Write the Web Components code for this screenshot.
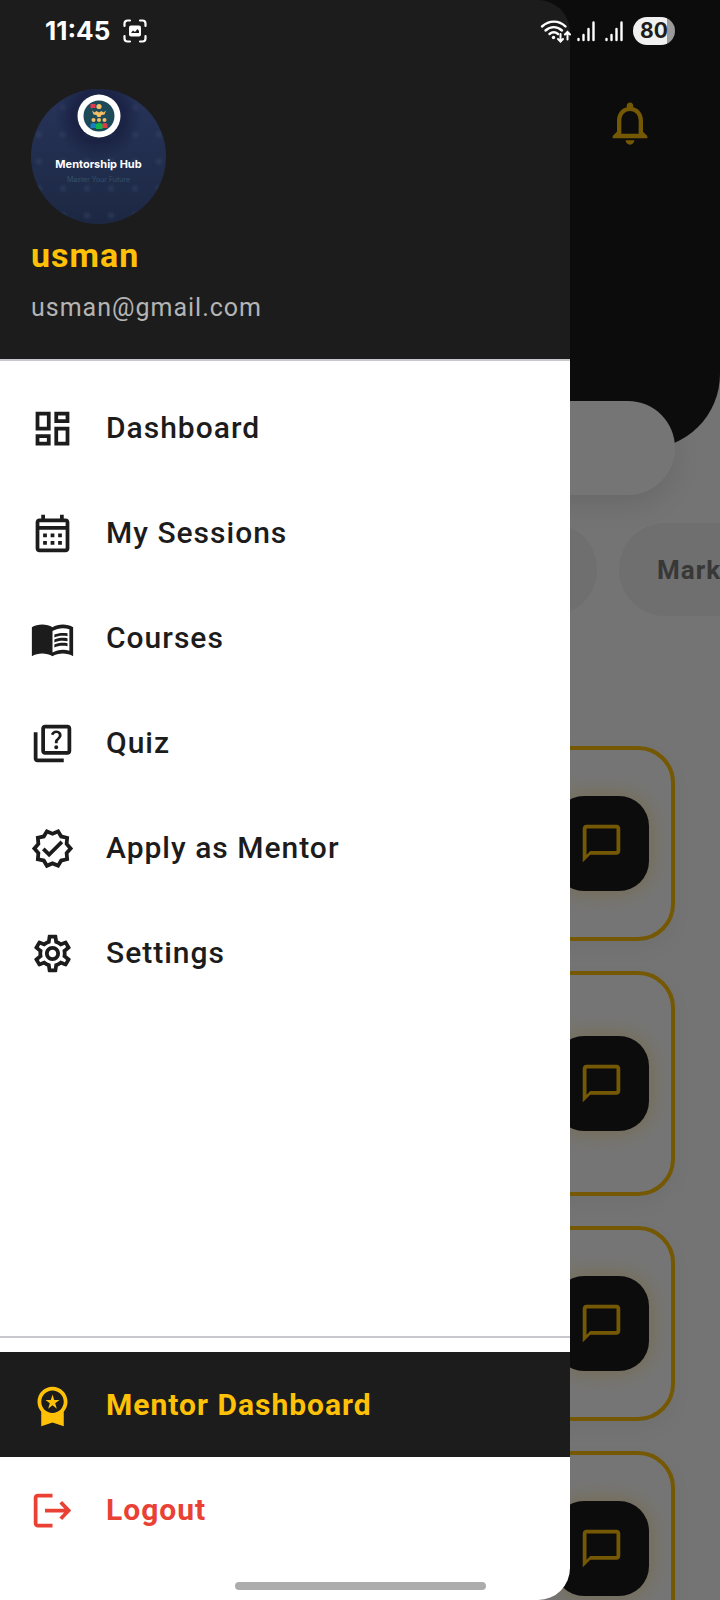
<!DOCTYPE html>
<html lang="en">
<head>
<meta charset="utf-8">
<meta name="viewport" content="width=device-width, initial-scale=1">
<title>Mentorship Hub</title>
<style>
  html, body {
    height: 100%;
    margin: 0;
  }

  body {
    --ink: #1c1c1c;
    --amber: #ffc107;
    --danger: #e94235;
    --line: #cac8ce;

    font-family: Roboto, "Noto Sans", sans-serif;
    color: var(--ink);
    overflow: hidden;
  }
</style>
</head>
<body>
<app-shell>
  <home-page slot="page">
    <filter-chip slot="chips">Design</filter-chip>
    <filter-chip slot="chips">Mark</filter-chip>
    <mentor-card></mentor-card>
    <mentor-card tall></mentor-card>
    <mentor-card></mentor-card>
    <mentor-card></mentor-card>
  </home-page>

  <nav-drawer slot="drawer">
    <user-header slot="header" email="usman@gmail.com">usman</user-header>
    <nav-item icon="dashboard">Dashboard</nav-item>
    <nav-item icon="calendar">My Sessions</nav-item>
    <nav-item icon="book">Courses</nav-item>
    <nav-item icon="quiz">Quiz</nav-item>
    <nav-item icon="verified">Apply as Mentor</nav-item>
    <nav-item icon="settings">Settings</nav-item>
    <nav-item slot="footer" icon="premium" tone="dark">Mentor Dashboard</nav-item>
    <nav-item slot="footer" icon="logout" tone="danger">Logout</nav-item>
  </nav-drawer>

  <status-bar slot="status" time="11:45" battery="80"></status-bar>
</app-shell>

<script>
const icons = {
  dashboard: '<path d="M19 5v2h-4V5h4M9 5v6H5V5h4m10 8v6h-4v-6h4M9 17v2H5v-2h4M21 3h-8v6h8V3zM11 3H3v10h8V3zm10 8h-8v10h8V11zm-10 4H3v6h8v-6z"/>',
  calendar: '<path d="M19 4h-1V2h-2v2H8V2H6v2H5c-1.11 0-1.99.9-1.99 2L3 20c0 1.1.89 2 2 2h14c1.1 0 2-.9 2-2V6c0-1.1-.9-2-2-2zm0 16H5V10h14v10zm0-12H5V6h14v2zM9 14H7v-2h2v2zm4 0h-2v-2h2v2zm4 0h-2v-2h2v2zm-8 4H7v-2h2v2zm4 0h-2v-2h2v2zm4 0h-2v-2h2v2z"/>',
  book: '<path fill-rule="evenodd" d="M17.5 4.5c-1.95 0-4.05.4-5.5 1.5-1.45-1.1-3.55-1.5-5.5-1.5S2.45 4.9 1 6v15.5C2.45 20.4 4.55 20 6.5 20s4.05.4 5.5 1.5c1.45-1.1 3.55-1.5 5.5-1.5s4.05.4 5.5 1.5V6c-1.45-1.1-3.55-1.5-5.5-1.5zM21 18.5c-1.1-.35-2.3-.5-3.5-.5-1.7 0-4.15.65-5.5 1.5V8c1.35-.85 3.8-1.5 5.5-1.5 1.2 0 2.4.15 3.5.5v11.5z"/><path d="M17.5 10.5c.88 0 1.73.09 2.5.26V9.24c-.79-.15-1.64-.24-2.5-.24-1.7 0-3.24.29-4.5.83v1.66c1.13-.64 2.7-.99 4.5-.99zM13 12.49v1.66c1.13-.64 2.7-.99 4.5-.99.88 0 1.73.09 2.5.26V11.9c-.79-.15-1.64-.24-2.5-.24-1.7 0-3.24.3-4.5.83zM17.5 14.33c-1.7 0-3.24.29-4.5.83v1.66c1.13-.64 2.7-.99 4.5-.99.88 0 1.73.09 2.5.26v-1.52c-.79-.16-1.64-.24-2.5-.24z"/>',
  quiz: '<path d="M4 6H2v14c0 1.1.9 2 2 2h14v-2H4V6zM20 2H8c-1.1 0-2 .9-2 2v12c0 1.1.9 2 2 2h12c1.1 0 2-.9 2-2V4c0-1.1-.9-2-2-2zm0 14H8V4h12v12zM13.51 10.16c.41-.73 1.18-1.16 1.63-1.8.48-.68.21-1.94-1.14-1.94-.88 0-1.32.67-1.5 1.23l-1.37-.57C11.51 5.96 12.52 5 13.99 5c1.23 0 2.08.56 2.51 1.26.37.6.58 1.73.01 2.57-.63.93-1.23 1.21-1.56 1.81-.13.24-.18.4-.18 1.18h-1.52c.01-.41-.06-1.08.26-1.66zM12.95 13.95c0-.59.47-1.04 1.05-1.04.59 0 1.04.45 1.04 1.04 0 .58-.44 1.05-1.04 1.05-.58 0-1.05-.47-1.05-1.05z"/>',
  verified: '<path d="M23 12l-2.44-2.78.34-3.68-3.61-.82-1.89-3.18L12 3 8.6 1.54 6.71 4.72l-3.61.81.34 3.68L1 12l2.44 2.78-.34 3.69 3.61.82 1.89 3.18L12 21l3.4 1.46 1.89-3.18 3.61-.82-.34-3.68L23 12zm-4.51 2.11l.26 2.79-2.74.62-1.43 2.41L12 18.82l-2.58 1.11-1.43-2.41-2.74-.62.26-2.8L3.66 12l1.85-2.12-.26-2.78 2.74-.61 1.43-2.41L12 5.18l2.58-1.11 1.43 2.41 2.74.62-.26 2.79L20.34 12l-1.85 2.11z"/><path fill="none" stroke="currentColor" stroke-width="2" d="M7.100 12.200l3.100 3.100 6.800-6.800"/>',
  settings: '<path d="M19.43 12.98c.04-.32.07-.64.07-.98 0-.34-.03-.66-.07-.98l2.11-1.65c.19-.15.24-.42.12-.64l-2-3.46c-.09-.16-.26-.25-.44-.25-.06 0-.12.01-.17.03l-2.49 1c-.52-.4-1.08-.73-1.69-.98l-.38-2.65C14.46 2.18 14.25 2 14 2h-4c-.25 0-.46.18-.49.42l-.38 2.65c-.61.25-1.17.59-1.69.98l-2.49-1c-.06-.02-.12-.03-.18-.03-.17 0-.34.09-.43.25l-2 3.46c-.13.22-.07.49.12.64l2.11 1.65c-.04.32-.07.65-.07.98 0 .33.03.66.07.98l-2.11 1.65c-.19.15-.24.42-.12.64l2 3.46c.09.16.26.25.44.25.06 0 .12-.01.17-.03l2.49-1c.52.4 1.08.73 1.69.98l.38 2.65c.03.24.24.42.49.42h4c.25 0 .46-.18.49-.42l.38-2.65c.61-.25 1.17-.59 1.69-.98l2.49 1c.06.02.12.03.18.03.17 0 .34-.09.43-.25l2-3.46c.12-.22.07-.49-.12-.64l-2.11-1.65zm-1.98-1.71c.04.31.05.52.05.73 0 .21-.02.43-.05.73l-.14 1.13.89.7 1.08.84-.7 1.21-1.27-.51-1.04-.42-.9.68c-.43.32-.84.56-1.25.73l-1.06.43-.16 1.13-.2 1.35h-1.4l-.19-1.35-.16-1.13-1.06-.43c-.43-.18-.83-.41-1.23-.71l-.91-.7-1.06.43-1.27.51-.7-1.21 1.08-.84.89-.7-.14-1.13c-.03-.31-.05-.54-.05-.74s.02-.43.05-.73l.14-1.13-.89-.7-1.08-.84.7-1.21 1.27.51 1.04.42.9-.68c.43-.32.84-.56 1.25-.73l1.06-.43.16-1.13.2-1.35h1.39l.19 1.35.16 1.13 1.06.43c.43.18.83.41 1.23.71l.91.7 1.06-.43 1.27-.51.7 1.21-1.07.85-.89.7.14 1.13zM12 8c-2.21 0-4 1.79-4 4s1.79 4 4 4 4-1.79 4-4-1.79-4-4-4zm0 6c-1.1 0-2-.9-2-2s.9-2 2-2 2 .9 2 2-.9 2-2 2z"/>',
  premium: '<path d="M9.68 13.69L12 11.93l2.31 1.76-.88-2.85L15.75 9h-2.84L12 6.19 11.09 9H8.25l2.31 1.84-.88 2.85zM20 10c0-4.42-3.58-8-8-8s-8 3.58-8 8c0 2.03.76 3.87 2 5.28V23l6-2 6 2v-7.72c1.24-1.41 2-3.25 2-5.28zm-8-6c3.31 0 6 2.69 6 6s-2.69 6-6 6-6-2.69-6-6 2.69-6 6-6z"/>',
  logout: '<path fill="none" stroke="currentColor" stroke-width="2" d="M12 4H4.200a1.200 1.200 0 0 0-1.200 1.200v13.600A1.200 1.200 0 0 0 4.200 20H12M8 12h12.500M16.400 7.600l4.200 4.400-4.200 4.400"/>',
  bell: '<path d="M12 22c1.1 0 2-.9 2-2h-4c0 1.1.9 2 2 2zm6-6v-5c0-3.07-1.63-5.64-4.5-6.32V4c0-.83-.67-1.5-1.5-1.5s-1.5.67-1.5 1.5v.68C7.64 5.36 6 7.92 6 11v5l-2 2v1h16v-1l-2-2zm-2 1H8v-6c0-2.48 1.51-4.5 4-4.5s4 2.02 4 4.5v6z"/>',
  chat: '<path d="M20 2H4c-1.1 0-2 .9-2 2v18l4-4h14c1.1 0 2-.9 2-2V4c0-1.1-.9-2-2-2zm0 14H6l-2 2V4h16v12z"/>',
};

// Shared base: clones the class template into an open shadow root.
class BaseElement extends HTMLElement {
  constructor() {
    super();
    this.attachShadow({mode: 'open'});
    const template = document.createElement('template');
    template.innerHTML = this.constructor.templateHTML;
    this.shadowRoot.appendChild(template.content.cloneNode(true));
  }
}

class MdIcon extends BaseElement {
  static get templateHTML() {
    return `
      <style>
        :host { display: block; flex: none; width: 45px; height: 45px; }
        svg { display: block; width: 100%; height: 100%; fill: currentColor; }
      </style>
      <svg viewBox="0 0 24 24" aria-hidden="true"></svg>
    `;
  }

  static get observedAttributes() { return ['name']; }

  attributeChangedCallback(name, oldValue, newValue) {
    this.shadowRoot.querySelector('svg').innerHTML = icons[newValue] || '';
  }
}

class AppShell extends BaseElement {
  static get templateHTML() {
    return `
      <style>
        :host { display: grid; height: 100vh; overflow: hidden; position: relative; background: #fff; }
        .layer { grid-area: 1 / 1; min-width: 0; min-height: 0; display: grid; }
        .page { overflow: hidden; }
        .scrim { background: rgba(0, 0, 0, .54); }
        .drawer { justify-items: start; }
        .top { align-items: start; pointer-events: none; }
        .bottom { align-items: end; justify-items: center; pointer-events: none; }
        .handle { width: 251px; height: 8px; margin-bottom: 10px; border-radius: 4px; background: #acacac; }
      </style>
      <div class="layer page"><slot name="page"></slot></div>
      <div class="layer scrim"></div>
      <div class="layer drawer"><slot name="drawer"></slot></div>
      <div class="layer top"><slot name="status"></slot></div>
      <div class="layer bottom"><div class="handle"></div></div>
    `;
  }
}

class StatusBar extends BaseElement {
  static get templateHTML() {
    return `
      <style>
        :host {
          display: flex;
          align-items: center;
          justify-content: space-between;
          height: 62px;
          padding: 0 45px;
          color: #fff;
          font-family: Inter, "Open Sans", sans-serif;
          font-weight: 700;
        }
        div { display: flex; align-items: center; gap: 10px; }
        .left { gap: 13px; }
        .time { font-size: 26px; line-height: 32px; }
        svg { display: block; fill: none; stroke: #fff; stroke-linecap: round; }
        .wifi { margin-right: -4px; }
        .battery {
          width: 42px;
          height: 28px;
          justify-content: center;
          border-radius: 14px;
          background: linear-gradient(90deg, #f0f0f0 80%, #9a9a9a 80%);
          color: #1c1c1c;
          font-size: 21px;
          line-height: 28px;
        }
      </style>
      <div class="left">
        <span class="time"></span>
        <svg width="24" height="24" viewBox="0 0 24 24" stroke-width="2.2">
          <path d="M1.500 7V4.500a3 3 0 0 1 3-3H7M17 1.500h2.500a3 3 0 0 1 3 3V7M22.500 17v2.500a3 3 0 0 1-3 3H17M7 22.500H4.500a3 3 0 0 1-3-3V17"/>
          <rect x="6" y="6.500" width="12" height="11" rx="2" fill="#fff" stroke="none"/>
          <path fill="#1c1c1c" stroke="none" d="M8 14l2-2.500 2 1.500 2.500-3L16 12v2z"/>
        </svg>
      </div>
      <div class="right">
        <svg class="wifi" width="31" height="24" viewBox="0 0 31 24" stroke-width="2.4">
          <path d="M2 7.500C9 1 19 1 25.500 7.500M5.500 11.500c5-4.500 11.500-4.500 16.500 0M9.500 15c2.500-2 6-2 8.500 0"/>
          <circle cx="13.500" cy="18.500" r="1.700" fill="#fff" stroke="none"/>
          <path stroke-width="2" d="M20.500 15v7M18 20l2.500 2.500L23 20M27.500 20.500v-7M25 15.500l2.500-2.500 2.500 2.500"/>
        </svg>
        <svg width="18" height="22" viewBox="0 0 18 22" stroke-width="2.400"><path d="M1.500 19v1M6.500 15v5M11.500 9v11M16.500 2.500V20"/></svg>
        <svg width="18" height="22" viewBox="0 0 18 22" stroke-width="2.400"><path d="M1.500 19v1M6.500 15v5M11.500 9v11M16.500 2.500V20"/></svg>
        <div class="battery"></div>
      </div>
    `;
  }

  connectedCallback() {
    this.shadowRoot.querySelector('.time').textContent = this.getAttribute('time');
    this.shadowRoot.querySelector('.battery').textContent = this.getAttribute('battery');
  }
}

class NavDrawer extends BaseElement {
  static get templateHTML() {
    return `
      <style>
        :host {
          display: flex;
          flex-direction: column;
          width: 570px;
          max-width: 80vw;
          height: 100vh;
          overflow: hidden;
          border-radius: 0 32px 32px 0;
        }
        nav { flex: 1; min-height: 0; padding-top: 14px; background: #fff; }
        .footer { border-top: 2px solid var(--line); padding: 14px 0 38px; background: #fff; }
      </style>
      <slot name="header"></slot>
      <nav aria-label="Main"><slot></slot></nav>
      <div class="footer"><slot name="footer"></slot></div>
    `;
  }
}

class UserHeader extends BaseElement {
  static get templateHTML() {
    return `
      <style>
        :host {
          display: flex;
          flex-direction: column;
          padding: 89px 31px 34px;
          border-bottom: 2px solid var(--line);
          background: var(--ink);
        }
        .name {
          margin-top: 11px;
          color: var(--amber);
          font-size: 34px;
          font-weight: 700;
          line-height: 40px;
          letter-spacing: 1px;
        }
        .email {
          margin-top: 15px;
          color: #b4b4b4;
          font-size: 25px;
          line-height: 35px;
          letter-spacing: 1px;
        }
      </style>
      <hub-avatar></hub-avatar>
      <div class="name"><slot></slot></div>
      <div class="email"></div>
    `;
  }

  connectedCallback() {
    this.shadowRoot.querySelector('.email').textContent = this.getAttribute('email');
  }
}

class HubAvatar extends BaseElement {
  static get templateHTML() {
    return `
      <style>
        :host {
          display: flex;
          flex-direction: column;
          align-items: center;
          box-sizing: border-box;
          width: 135px;
          height: 135px;
          padding-top: 5px;
          border-radius: 50%;
          overflow: hidden;
          background:
            radial-gradient(circle at 50% 20%, rgba(20, 26, 58, .6) 20%, transparent 34%),
            radial-gradient(circle, rgba(70, 88, 130, .25) 1px, transparent 5px) -4px 5px / 24px 27px,
            linear-gradient(#27345a, #1c2842);
          color: #fff;
          font-family: Inter, "Open Sans", sans-serif;
          white-space: nowrap;
        }
        svg { display: block; }
        b { margin-top: 19px; font-size: 11px; line-height: 15px; }
        small { margin-top: 4px; color: #31536f; font-size: 7px; line-height: 8px; }
      </style>
      <svg width="44" height="44" viewBox="0 0 44 44" aria-hidden="true">
        <circle cx="22" cy="22" r="21.500" fill="#fff"/>
        <circle cx="22" cy="22" r="15.500" fill="#1d4a58"/>
        <path fill="#e0394b" d="M13.500 10h5v4h-3l-1 1v-1h-1z"/>
        <g fill="#f3bd68">
          <circle cx="22" cy="12.500" r="2.600"/>
          <path d="M15 16.500l2.500 2 2-1.500 2.500 1.500 2.500-1.500 2 1.500 2.500-2-1.500 4-3 .5-1 2h-3l-1-2-3-.5z"/>
          <circle cx="16.500" cy="26" r="2"/>
          <circle cx="22" cy="26" r="2"/>
          <circle cx="27.500" cy="26" r="2"/>
        </g>
        <path fill="#187fc4" d="M13.500 30q3-2 5.500 0v4h-5.500z"/>
        <path fill="#d93b48" d="M25 30q3-2 5.500 0v4H25z"/>
        <path fill="#10b64a" d="M19 30q3-2 6.500 0v5H19z"/>
      </svg>
      <b>Mentorship Hub</b>
      <small>Master Your Future</small>
    `;
  }
}

class NavItem extends BaseElement {
  static get templateHTML() {
    return `
      <style>
        :host { display: block; color: var(--ink); font-weight: 500; }
        :host([tone="dark"]) { background: var(--ink); color: var(--amber); font-weight: 700; }
        :host([tone="danger"]) { color: var(--danger); font-weight: 700; }
        a {
          display: flex;
          align-items: center;
          gap: 31px;
          height: 105px;
          padding: 0 30px;
          color: inherit;
          text-decoration: none;
          font-size: 30px;
          line-height: 42px;
          letter-spacing: 1px;
        }
        md-icon { margin-top: 2px; }
      </style>
      <a href="#"><md-icon></md-icon><span><slot></slot></span></a>
    `;
  }

  connectedCallback() {
    this.shadowRoot.querySelector('md-icon').setAttribute('name', this.getAttribute('icon'));
  }
}

class HomePage extends BaseElement {
  static get templateHTML() {
    return `
      <style>
        :host { display: block; background: #fcfcfc; }
        header {
          display: flex;
          justify-content: flex-end;
          align-items: flex-start;
          box-sizing: border-box;
          height: 449px;
          padding: 97px 64px 0;
          border-radius: 0 0 75px 75px;
          background: var(--ink);
        }
        button { padding: 0; border: 0; background: none; color: var(--amber); }
        header md-icon { width: 52px; height: 52px; }
        .search {
          display: block;
          box-sizing: border-box;
          width: calc(100% - 90px);
          height: 94px;
          margin: -48px 45px 0;
          padding: 0 45px;
          border: 0;
          border-radius: 47px;
          background: #fff;
          box-shadow: 0 10px 28px rgba(0, 0, 0, .1);
          font: inherit;
        }
        .chips { display: flex; justify-content: flex-end; gap: 22px; margin: 28px -80px 0 0; }
        .list { display: grid; gap: 30px; padding: 130px 45px 30px; }
      </style>
      <header>
        <button type="button" aria-label="Notifications"><md-icon name="bell"></md-icon></button>
      </header>
      <input class="search" type="search" aria-label="Search">
      <div class="chips"><slot name="chips"></slot></div>
      <div class="list"><slot></slot></div>
    `;
  }
}

class FilterChip extends BaseElement {
  static get templateHTML() {
    return `
      <style>
        :host { display: block; }
        button {
          min-width: 181px;
          height: 93px;
          padding: 0 38px;
          border: 0;
          border-radius: 47px;
          background: #f1f1f1;
          color: #7a7a7a;
          font: 700 26px/36px Roboto, sans-serif;
          letter-spacing: 1px;
          text-align: left;
        }
      </style>
      <button type="button"><slot></slot></button>
    `;
  }
}

class MentorCard extends BaseElement {
  static get templateHTML() {
    return `
      <style>
        :host {
          display: flex;
          align-items: center;
          justify-content: flex-end;
          box-sizing: border-box;
          min-height: 195px;
          padding: 0 22px;
          border: 4px solid var(--amber);
          border-radius: 37px;
          background: #fff;
          box-shadow: 0 8px 22px rgba(0, 0, 0, .04);
        }
        :host([tall]) { min-height: 225px; }
        button {
          padding: 25px;
          border: 0;
          border-radius: 30px;
          background: var(--ink);
          color: var(--amber);
          box-shadow: 0 0 22px rgba(255, 193, 7, .4);
        }
      </style>
      <button type="button" aria-label="Chat"><md-icon name="chat"></md-icon></button>
    `;
  }
}

window.customElements.define('md-icon', MdIcon);
window.customElements.define('status-bar', StatusBar);
window.customElements.define('hub-avatar', HubAvatar);
window.customElements.define('user-header', UserHeader);
window.customElements.define('nav-item', NavItem);
window.customElements.define('nav-drawer', NavDrawer);
window.customElements.define('filter-chip', FilterChip);
window.customElements.define('mentor-card', MentorCard);
window.customElements.define('home-page', HomePage);
window.customElements.define('app-shell', AppShell);
</script>
</body>
</html>
